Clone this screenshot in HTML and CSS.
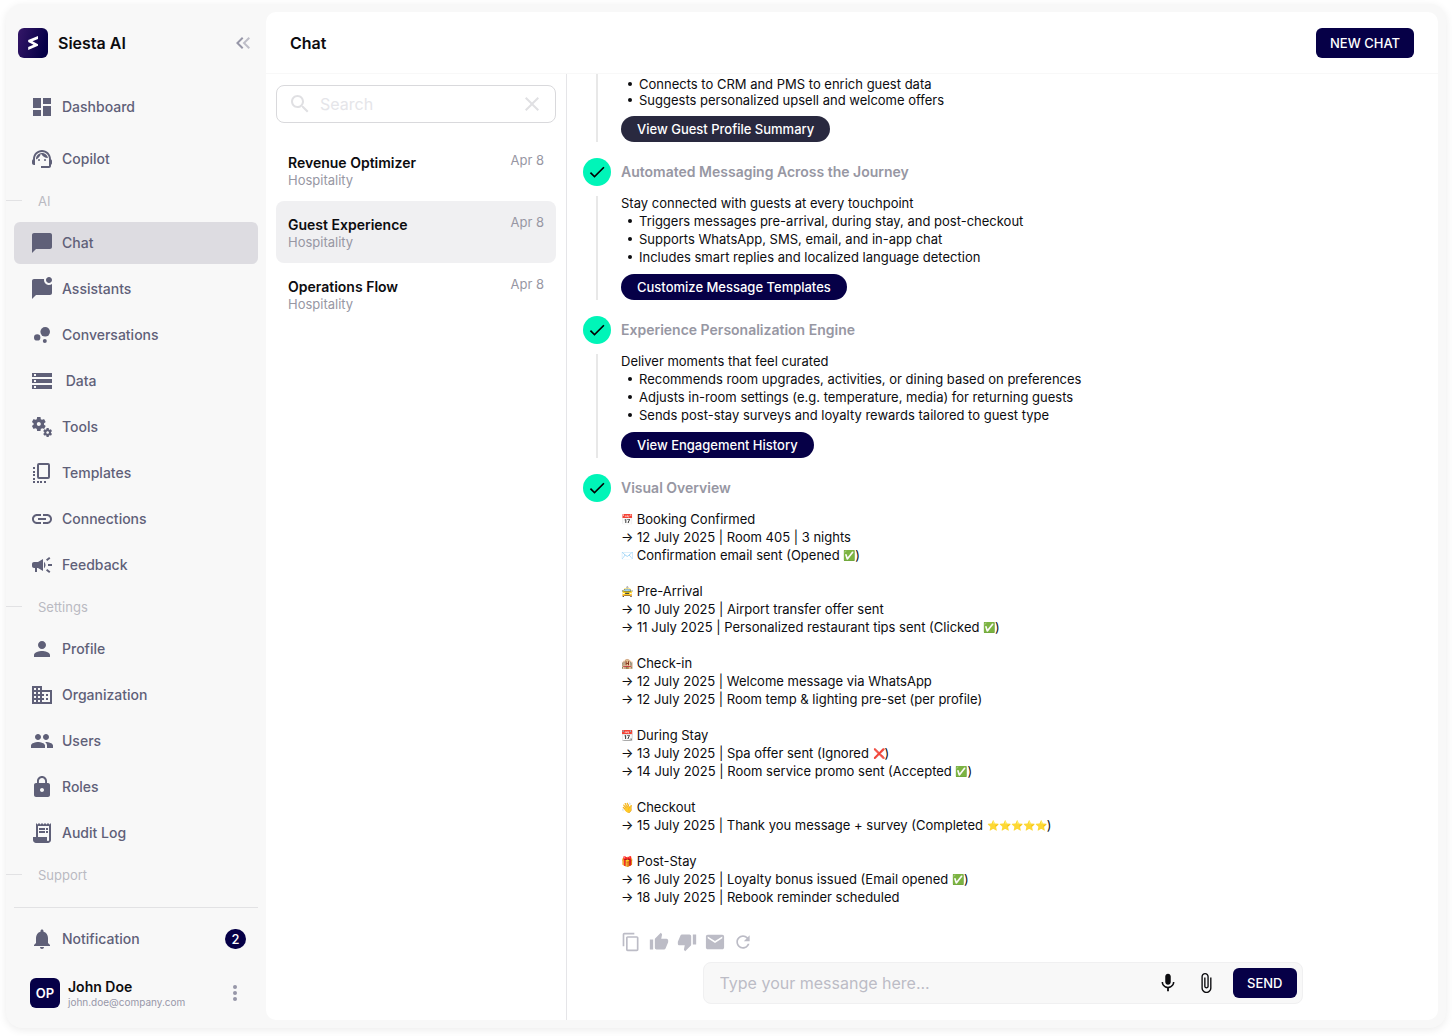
FILE: index.html
```html
<!DOCTYPE html>
<html lang="en">
  <head>
    <meta charset="UTF-8" />
    <meta name="viewport" content="width=device-width, initial-scale=1.0" />
    <title>Siesta AI - Chat</title>
    <link rel="stylesheet" href="styles.css">
  </head>

  <body>
    <div class="app">
      <aside class="sidebar">
        <div class="brand">
          <svg class="logo" viewBox="0 0 30 30">
            <defs>
              <linearGradient id="logo-bg" x1="0" y1="0" x2="1" y2="0.3">
                <stop offset="0" stop-color="#351768" />
                <stop offset="1" stop-color="#060047" />
              </linearGradient>
            </defs>
            <rect width="30" height="30" rx="6" fill="url(#logo-bg)" />
            <path d="M20 8v3l-5.500 2.300L20 16.200v1.600L10.200 22v-3l5.300-2.300-5.300-2.700v-1.900z" fill="#fff" />
          </svg>
          <span class="brand-name">Siesta AI</span>
          <button class="icon-button collapse" aria-label="Collapse menu">
            <svg class="icon" viewBox="0 0 24 24"><path opacity=".6" d="M17.590 18L19 16.590 14.420 12 19 7.410 17.590 6l-6 6z" /><path d="M11 18l1.410-1.410L7.830 12l4.580-4.590L11 6l-6 6z" /></svg>
          </button>
        </div>

        <nav class="nav">
          <div class="nav-group nav-top">
            <a class="nav-item" href="#">
              <svg class="icon" viewBox="0 0 24 24"><path d="M3 13h8V3H3v10zm0 8h8v-6H3v6zm10 0h8V11h-8v10zm0-18v6h8V3h-8z" /></svg>
              Dashboard
            </a>
            <a class="nav-item" href="#">
              <svg class="icon" viewBox="0 0 24 24"><path d="M21 12.220C21 6.730 16.740 3 12 3c-4.690 0-9 3.650-9 9.280-.6.340-1 .980-1 1.720v2c0 1.100.9 2 2 2h1v-6.100c0-3.870 3.130-7 7-7s7 3.130 7 7V19h-8v2h8c1.100 0 2-.9 2-2v-1.220c.590-.310 1-.920 1-1.640v-2.300c0-.7-.410-1.310-1-1.620z" /><circle cx="9" cy="13" r="1" /><circle cx="15" cy="13" r="1" /><path d="M18 11.030C17.520 8.180 15.040 6 12.050 6c-3.030 0-6.290 2.510-6.030 6.450 2.470-1.010 4.330-3.210 4.860-5.890 1.310 2.630 4 4.440 7.120 4.470z" /></svg>
              Copilot
            </a>
          </div>

          <h2 class="nav-label">AI</h2>
          <div class="nav-group">
            <a class="nav-item active" href="#">
              <svg class="icon" viewBox="0 0 24 24"><path d="M20 2H4c-1.100 0-2 .9-2 2v18l4-4h14c1.100 0 2-.9 2-2V4c0-1.100-.9-2-2-2z" /></svg>
              Chat
            </a>
            <a class="nav-item" href="#">
              <svg class="icon" viewBox="0 0 24 24"><path d="M22 6.980V16c0 1.100-.9 2-2 2H6l-4 4V4c0-1.100.9-2 2-2h10.100c-.060.320-.1.660-.1 1 0 2.760 2.240 5 5 5 1.130 0 2.160-.390 3-1.020zM16 3c0 1.660 1.340 3 3 3s3-1.340 3-3-1.340-3-3-3-3 1.340-3 3z" /></svg>
              Assistants
            </a>
            <a class="nav-item" href="#">
              <svg class="icon" viewBox="0 0 24 24"><circle cx="7.200" cy="14.400" r="3.200" /><circle cx="14.800" cy="18" r="2" /><circle cx="15.200" cy="8.800" r="4.800" /></svg>
              Conversations
            </a>
            <a class="nav-item" href="#">
              <svg class="icon" viewBox="0 0 24 24"><path d="M2 20h20v-4H2v4zm2-3h2v2H4v-2zM2 4v4h20V4H2zm4 3H4V5h2v2zm-4 7h20v-4H2v4zm2-3h2v2H4v-2z" /></svg>
              &nbsp;Data
            </a>
            <a class="nav-item" href="#">
              <svg class="icon" viewBox="0 0 24 24"><path d="M14.170 13.710l1.400-2.420c.090-.150.050-.340-.080-.450l-1.480-1.160c.030-.220.050-.450.050-.680s-.020-.460-.050-.690l1.480-1.160c.130-.110.170-.3.080-.450l-1.400-2.420c-.090-.150-.270-.210-.430-.150l-1.740.7c-.360-.280-.750-.510-1.180-.690l-.260-1.850c-.030-.160-.180-.290-.350-.290h-2.800c-.170 0-.320.130-.350.3L6.800 4.150c-.420.180-.820.410-1.180.690l-1.740-.7c-.160-.060-.340 0-.430.150l-1.400 2.420c-.090.150-.050.340.080.450l1.480 1.160c-.030.220-.050.450-.050.680s.020.460.050.690l-1.480 1.160c-.130.110-.170.3-.080.450l1.400 2.420c.090.150.270.210.430.150l1.740-.7c.360.280.750.510 1.180.690l.260 1.850c.030.160.180.290.350.290h2.800c.170 0 .320-.130.350-.3l.260-1.850c.420-.180.820-.410 1.180-.690l1.740.7c.160.060.340 0 .430-.150zM8.810 11c-1.100 0-2-.9-2-2s.9-2 2-2 2 .9 2 2-.9 2-2 2z" /><path d="M21.920 18.670l-.960-.740c.020-.140.040-.290.040-.440 0-.150-.010-.3-.040-.440l.950-.740c.080-.070.110-.190.050-.290l-.9-1.550c-.050-.1-.170-.130-.280-.1l-1.110.450c-.230-.180-.480-.330-.760-.440l-.170-1.180c-.010-.120-.110-.2-.210-.2h-1.790c-.110 0-.210.080-.220.190l-.170 1.180c-.270.120-.530.260-.760.440l-1.110-.450c-.1-.040-.220 0-.280.1l-.9 1.550c-.050.1-.040.220.050.290l.950.740c-.020.140-.030.290-.030.440 0 .150.010.3.030.440l-.950.740c-.080.070-.110.190-.050.290l.9 1.550c.050.1.170.130.280.1l1.110-.450c.230.180.480.330.760.440l.170 1.180c.020.110.110.190.220.190h1.790c.110 0 .210-.080.220-.190l.170-1.180c.270-.120.530-.260.750-.440l1.120.450c.1.040.220 0 .280-.1l.9-1.550c.060-.090.030-.210-.050-.280zm-4.290.160c-.740 0-1.350-.6-1.350-1.350s.6-1.350 1.350-1.350 1.350.6 1.350 1.350-.610 1.350-1.350 1.350z" /></svg>
              Tools
            </a>
            <a class="nav-item" href="#">
              <svg class="icon" viewBox="0 0 24 24"><rect x="8" y="3" width="11" height="14" rx="1" fill="none" stroke="currentColor" stroke-width="2" /><path d="M3 6h2v2H3zm0 4h2v2H3zm0 3h2v2H3zm0 4h2v2H3zm0 3h2v2H3zm4 0h2v2H7zm3 0h2v2h-2zm4 0h2v2h-2z" /></svg>
              Templates
            </a>
            <a class="nav-item" href="#">
              <svg class="icon" viewBox="0 0 24 24"><path d="M3.900 12c0-1.710 1.390-3.100 3.100-3.100h4V7H7c-2.760 0-5 2.240-5 5s2.240 5 5 5h4v-1.900H7c-1.710 0-3.100-1.390-3.100-3.100zM8 13h8v-2H8v2zm9-6h-4v1.900h4c1.710 0 3.100 1.390 3.100 3.100s-1.390 3.100-3.100 3.100h-4V17h4c2.760 0 5-2.240 5-5s-2.240-5-5-5z" /></svg>
              Connections
            </a>
            <a class="nav-item" href="#">
              <svg class="icon" viewBox="0 0 24 24"><path d="M18 11v2h4v-2h-4zm-2 6.610c.960.710 2.210 1.650 3.200 2.390.4-.530.8-1.070 1.200-1.600-.990-.740-2.240-1.680-3.200-2.400-.4.540-.8 1.080-1.200 1.610zM20.400 5.600c-.4-.530-.8-1.070-1.200-1.600-.990.740-2.240 1.680-3.200 2.400.4.530.8 1.070 1.200 1.600.960-.720 2.210-1.650 3.200-2.400zM4 9c-1.100 0-2 .9-2 2v2c0 1.100.9 2 2 2h1v4h2v-4h1l5 3V6L8 9H4zm11.500 3c0-1.330-.580-2.530-1.500-3.350v6.690c.920-.810 1.500-2.010 1.500-3.340z" /></svg>
              Feedback
            </a>
          </div>

          <h2 class="nav-label">Settings</h2>
          <div class="nav-group">
            <a class="nav-item" href="#">
              <svg class="icon" viewBox="0 0 24 24"><path d="M12 12c2.210 0 4-1.790 4-4s-1.790-4-4-4-4 1.790-4 4 1.790 4 4 4zm0 2c-2.670 0-8 1.340-8 4v2h16v-2c0-2.660-5.330-4-8-4z" /></svg>
              Profile
            </a>
            <a class="nav-item" href="#">
              <svg class="icon" viewBox="0 0 24 24"><path d="M12 7V3H2v18h20V7H12zM6 19H4v-2h2v2zm0-4H4v-2h2v2zm0-4H4V9h2v2zm0-4H4V5h2v2zm4 12H8v-2h2v2zm0-4H8v-2h2v2zm0-4H8V9h2v2zm0-4H8V5h2v2zm10 12h-8v-2h2v-2h-2v-2h2v-2h-2V9h8v10zm-2-8h-2v2h2v-2zm0 4h-2v2h2v-2z" /></svg>
              Organization
            </a>
            <a class="nav-item" href="#">
              <svg class="icon" viewBox="0 0 24 24"><path d="M16 11c1.660 0 2.990-1.340 2.990-3S17.660 5 16 5c-1.660 0-3 1.340-3 3s1.340 3 3 3zm-8 0c1.660 0 2.990-1.340 2.990-3S9.660 5 8 5C6.340 5 5 6.340 5 8s1.340 3 3 3zm0 2c-2.330 0-7 1.170-7 3.500V19h14v-2.500c0-2.330-4.670-3.500-7-3.500zm8 0c-.290 0-.620.020-.970.050 1.160.840 1.970 1.970 1.970 3.450V19h6v-2.500c0-2.330-4.670-3.500-7-3.500z" /></svg>
              Users
            </a>
            <a class="nav-item" href="#">
              <svg class="icon" viewBox="0 0 24 24"><path d="M18 8h-1V6c0-2.760-2.240-5-5-5S7 3.240 7 6v2H6c-1.100 0-2 .9-2 2v10c0 1.100.9 2 2 2h12c1.100 0 2-.9 2-2V10c0-1.100-.9-2-2-2zm-6 9c-1.100 0-2-.9-2-2s.9-2 2-2 2 .9 2 2-.9 2-2 2zm3.100-9H8.900V6c0-1.710 1.390-3.100 3.100-3.100 1.710 0 3.100 1.390 3.100 3.100v2z" /></svg>
              Roles
            </a>
            <a class="nav-item" href="#">
              <svg class="icon" viewBox="0 0 24 24"><path d="M19.500 3.500L18 2l-1.500 1.500L15 2l-1.500 1.500L12 2l-1.500 1.500L9 2 7.500 3.500 6 2v14H3v3c0 1.660 1.340 3 3 3h12c1.660 0 3-1.340 3-3V2l-1.500 1.500zM19 19c0 .550-.450 1-1 1s-1-.450-1-1v-3H8V5h11v14z" /><path d="M9 7h6v2H9zm7 0h2v2h-2zm-7 3h6v2H9zm7 0h2v2h-2z" /></svg>
              Audit Log
            </a>
          </div>

          <h2 class="nav-label">Support</h2>
        </nav>

        <div class="sidebar-footer">
          <a class="nav-item" href="#">
            <svg class="icon" viewBox="0 0 24 24"><path d="M12 22c1.100 0 2-.9 2-2h-4c0 1.100.890 2 2 2zm6-6v-5c0-3.070-1.640-5.640-4.500-6.320V4c0-.830-.670-1.500-1.500-1.500s-1.500.670-1.500 1.500v.680C7.630 5.360 6 7.920 6 11v5l-2 2v1h16v-1l-2-2z" /></svg>
            Notification
            <span class="badge">2</span>
          </a>
          <div class="user">
            <div class="avatar">OP</div>
            <div class="user-info">
              <div class="user-name">John Doe</div>
              <div class="user-email">john.doe@company.com</div>
            </div>
            <button class="icon-button user-menu" aria-label="Account menu">
              <svg class="icon" viewBox="0 0 24 24"><circle cx="12" cy="6" r="2" /><circle cx="12" cy="12" r="2" /><circle cx="12" cy="18" r="2" /></svg>
            </button>
          </div>
        </div>
      </aside>

      <main class="main">
        <header class="main-header">
          <h1>Chat</h1>
          <button class="primary-button">NEW CHAT</button>
        </header>

        <div class="main-body">
          <section class="chat-list">
            <div class="search">
              <svg class="icon" viewBox="0 0 24 24"><path d="M15.500 14h-.790l-.280-.270C15.410 12.590 16 11.110 16 9.500 16 5.910 13.090 3 9.500 3S3 5.910 3 9.500 5.910 16 9.500 16c1.610 0 3.090-.590 4.230-1.570l.270.280v.790l5 4.990L20.490 19l-4.990-5zm-6 0C7.010 14 5 11.990 5 9.500S7.010 5 9.500 5 14 7.010 14 9.500 11.990 14 9.500 14z" /></svg>
              <input type="text" placeholder="Search" aria-label="Search" />
              <button class="icon-button" aria-label="Clear search">
                <svg class="icon" viewBox="0 0 24 24"><path d="M19 6.410L17.590 5 12 10.590 6.410 5 5 6.410 10.590 12 5 17.590 6.410 19 12 13.410 17.590 19 19 17.590 13.410 12z" /></svg>
              </button>
            </div>

            <a class="chat-item" href="#">
              <div>
                <div class="chat-title">Revenue Optimizer</div>
                <div class="chat-tag">Hospitality</div>
              </div>
              <span class="chat-date">Apr 8</span>
            </a>
            <a class="chat-item selected" href="#">
              <div>
                <div class="chat-title">Guest Experience</div>
                <div class="chat-tag">Hospitality</div>
              </div>
              <span class="chat-date">Apr 8</span>
            </a>
            <a class="chat-item" href="#">
              <div>
                <div class="chat-title">Operations Flow</div>
                <div class="chat-tag">Hospitality</div>
              </div>
              <span class="chat-date">Apr 8</span>
            </a>
          </section>

          <section class="conversation">
            <div class="messages">
              <div class="step-body step-first">
                <div class="step-content">
                  <ul>
                    <li>Connects to CRM and PMS to enrich guest data</li>
                    <li>Suggests personalized upsell and welcome offers</li>
                  </ul>
                  <button class="pill hovered">View Guest Profile Summary</button>
                </div>
              </div>

              <div class="step-head">
                <span class="check"><svg viewBox="0 0 24 24"><path d="M9 16.170L4.830 12l-1.420 1.410L9 19 21 7l-1.410-1.410z" /></svg></span>
                <h3>Automated Messaging Across the Journey</h3>
              </div>
              <div class="step-body">
                <div class="step-content">
                  <p>Stay connected with guests at every touchpoint</p>
                  <ul>
                    <li>Triggers messages pre-arrival, during stay, and post-checkout</li>
                    <li>Supports WhatsApp, SMS, email, and in-app chat</li>
                    <li>Includes smart replies and localized language detection</li>
                  </ul>
                  <button class="pill">Customize Message Templates</button>
                </div>
              </div>

              <div class="step-head">
                <span class="check"><svg viewBox="0 0 24 24"><path d="M9 16.170L4.830 12l-1.420 1.410L9 19 21 7l-1.410-1.410z" /></svg></span>
                <h3>Experience Personalization Engine</h3>
              </div>
              <div class="step-body">
                <div class="step-content">
                  <p>Deliver moments that feel curated</p>
                  <ul>
                    <li>Recommends room upgrades, activities, or dining based on preferences</li>
                    <li>Adjusts in-room settings (e.g. temperature, media) for returning guests</li>
                    <li>Sends post-stay surveys and loyalty rewards tailored to guest type</li>
                  </ul>
                  <button class="pill">View Engagement History</button>
                </div>
              </div>

              <div class="step-head">
                <span class="check"><svg viewBox="0 0 24 24"><path d="M9 16.170L4.830 12l-1.420 1.410L9 19 21 7l-1.410-1.410z" /></svg></span>
                <h3>Visual Overview</h3>
              </div>
              <div class="overview">
                <p><span class="emoji">📅</span> Booking Confirmed<br />→ 12 July 2025 | Room 405 | 3 nights<br /><span class="emoji">✉️</span> Confirmation email sent (Opened <span class="emoji">✅</span>)</p>
                <p><span class="emoji">🚖</span> Pre-Arrival<br />→ 10 July 2025 | Airport transfer offer sent<br />→ 11 July 2025 | Personalized restaurant tips sent (Clicked <span class="emoji">✅</span>)</p>
                <p><span class="emoji">🏨</span> Check-in<br />→ 12 July 2025 | Welcome message via WhatsApp<br />→ 12 July 2025 | Room temp &amp; lighting pre-set (per profile)</p>
                <p><span class="emoji">📆</span> During Stay<br />→ 13 July 2025 | Spa offer sent (Ignored <span class="emoji">❌</span>)<br />→ 14 July 2025 | Room service promo sent (Accepted <span class="emoji">✅</span>)</p>
                <p><span class="emoji">👋</span> Checkout<br />→ 15 July 2025 | Thank you message + survey (Completed <span class="emoji">⭐⭐⭐⭐⭐</span>)</p>
                <p><span class="emoji">🎁</span> Post-Stay<br />→ 16 July 2025 | Loyalty bonus issued (Email opened <span class="emoji">✅</span>)<br />→ 18 July 2025 | Rebook reminder scheduled</p>
              </div>

              <div class="message-actions">
                <button class="icon-button" aria-label="Copy"><svg class="icon" viewBox="0 0 24 24"><path d="M16 1H4c-1.100 0-2 .9-2 2v14h2V3h12V1zm3 4H8c-1.100 0-2 .9-2 2v14c0 1.100.9 2 2 2h11c1.100 0 2-.9 2-2V7c0-1.100-.9-2-2-2zm0 16H8V7h11v14z" /></svg></button>
                <button class="icon-button" aria-label="Like"><svg class="icon" viewBox="0 0 24 24"><path d="M1 21h4V9H1v12zm22-11c0-1.100-.9-2-2-2h-6.310l.950-4.570.030-.320c0-.410-.170-.790-.440-1.060L14.170 1 7.590 7.590C7.220 7.950 7 8.450 7 9v10c0 1.100.9 2 2 2h9c.830 0 1.540-.5 1.840-1.220l3.020-7.050c.090-.230.140-.470.140-.730v-2z" /></svg></button>
                <button class="icon-button" aria-label="Dislike"><svg class="icon" viewBox="0 0 24 24"><path d="M15 3H6c-.830 0-1.540.5-1.840 1.220l-3.020 7.050c-.090.230-.140.470-.140.730v2c0 1.100.9 2 2 2h6.310l-.950 4.570-.030.320c0 .410.170.790.440 1.060L9.830 23l6.590-6.590c.360-.360.580-.860.580-1.410V5c0-1.100-.9-2-2-2zm4 0v12h4V3h-4z" /></svg></button>
                <button class="icon-button" aria-label="Send by email"><svg class="icon" viewBox="1 1 22 22"><path d="M20 4H4c-1.100 0-1.990.9-1.990 2L2 18c0 1.100.9 2 2 2h16c1.100 0 2-.9 2-2V6c0-1.100-.9-2-2-2zm0 4l-8 5-8-5V6l8 5 8-5v2z" /></svg></button>
                <button class="icon-button" aria-label="Regenerate"><svg class="icon" viewBox="0 0 24 24"><path d="M17.650 6.350C16.200 4.900 14.210 4 12 4c-4.420 0-7.990 3.580-7.990 8s3.570 8 7.990 8c3.730 0 6.840-2.550 7.730-6h-2.080c-.820 2.330-3.040 4-5.650 4-3.310 0-6-2.690-6-6s2.690-6 6-6c1.660 0 3.140.690 4.220 1.780L13 11h7V4l-2.350 2.350z" /></svg></button>
              </div>
            </div>

            <form class="composer">
              <input type="text" placeholder="Type your messange here..." aria-label="Message" />
              <button type="button" class="icon-button" aria-label="Record voice"><svg class="icon" viewBox="0 0 24 24"><path d="M12 14c1.660 0 2.990-1.340 2.990-3L15 5c0-1.660-1.340-3-3-3S9 3.340 9 5v6c0 1.660 1.340 3 3 3zm5.300-3c0 3-2.540 5.100-5.300 5.100S6.700 14 6.700 11H5c0 3.410 2.720 6.230 6 6.720V21h2v-3.280c3.280-.480 6-3.300 6-6.720h-1.700z" /></svg></button>
              <button type="button" class="icon-button" aria-label="Attach file"><svg class="icon" viewBox="0 0 24 24"><path d="M16.500 6v11.500c0 2.210-1.790 4-4 4s-4-1.790-4-4V5c0-1.380 1.120-2.500 2.500-2.500s2.500 1.120 2.500 2.500v10.500c0 .550-.450 1-1 1s-1-.450-1-1V6H10v9.500c0 1.380 1.120 2.500 2.500 2.500s2.500-1.120 2.500-2.500V5c0-2.210-1.790-4-4-4S7 2.790 7 5v12.500c0 3.040 2.460 5.500 5.500 5.500s5.500-2.460 5.500-5.500V6h-1.500z" /></svg></button>
              <button type="button" class="primary-button">SEND</button>
            </form>
          </section>
        </div>
      </main>
    </div>
  </body>
</html>
```

FILE: styles.css
```css
* {
  box-sizing: border-box;
}

body {
  margin: 0;
  padding: 4px 6px 8px;
  height: 100vh;
  background: white;
  font-family: Inter, sans-serif;
  color: #0c0c0f;
}

h1,
h2,
h3,
p,
ul {
  margin: 0;
  padding: 0;
  font-weight: normal;
}

a {
  color: inherit;
  text-decoration: none;
}

button,
input {
  font-family: inherit;
  color: inherit;
}

button {
  padding: 0;
  border: none;
  background: none;
  cursor: pointer;
}

.icon {
  display: block;
  flex: none;
  width: 24px;
  height: 24px;
  fill: currentColor;
}

.icon-button {
  flex: none;
}

.app {
  display: flex;
  height: 100%;
  border-radius: 16px;
  background: #f8f8f8;
  box-shadow: 0 2px 8px rgba(0, 0, 0, 0.08);
}

/* sidebar */

.sidebar {
  display: flex;
  flex-direction: column;
  flex: none;
  width: 260px;
  padding: 24px 8px 20px;
}

.brand {
  display: flex;
  align-items: center;
  height: 30px;
  margin: 0 3px 28px 4px;
}

.logo {
  width: 30px;
  height: 30px;
  margin-right: 10px;
}

.brand-name {
  font-size: 16px;
  font-weight: 600;
}

.collapse {
  margin-left: auto;
  color: #9797a8;
}

.nav {
  flex: 1;
  overflow: hidden;
  margin: 0 -8px;
  padding: 0 8px;
}

.nav-group {
  display: flex;
  flex-direction: column;
  gap: 4px;
}

.nav-top {
  gap: 10px;
}

.nav-item {
  display: flex;
  align-items: center;
  gap: 8px;
  height: 42px;
  padding: 0 12px 0 16px;
  border-radius: 6px;
  color: #5f6078;
  font-size: 14px;
  font-weight: 500;
  line-height: 20px;
}

.nav-item.active {
  background: #dddce1;
}

.nav-label {
  display: flex;
  align-items: center;
  gap: 16px;
  height: 42px;
  margin-left: -8px;
  padding-bottom: 1px;
  color: #babac2;
  font-size: 13px;
  line-height: 18px;
}

.nav-label::before {
  content: "";
  width: 16px;
  height: 1px;
  background: #e2e2e4;
}

.sidebar-footer {
  padding-top: 10px;
  border-top: 1px solid #e2e2e4;
}

.badge {
  min-width: 21px;
  height: 20px;
  margin-left: auto;
  border-radius: 10px;
  background: #060047;
  color: white;
  font-size: 13px;
  text-align: center;
}

.user {
  display: flex;
  align-items: center;
  gap: 8px;
  margin-top: 18px;
  padding: 0 11px 0 16px;
}

.avatar {
  width: 30px;
  height: 30px;
  border-radius: 6px;
  background: #060047;
  color: white;
  font-size: 13px;
  font-weight: 600;
  line-height: 30px;
  text-align: center;
}

.user-name {
  font-size: 14px;
  font-weight: 600;
  line-height: 18px;
}

.user-email {
  color: #9797a8;
  font-size: 10px;
  line-height: 12px;
}

.user-menu {
  margin-left: auto;
  color: #9797a8;
}

/* main panel */

.main {
  display: flex;
  flex-direction: column;
  flex: 1;
  min-width: 0;
  margin: 8px 8px 8px 0;
  border-radius: 10px;
  background: white;
}

.main-header {
  display: flex;
  align-items: center;
  justify-content: space-between;
  height: 62px;
  padding: 0 24px;
  border-bottom: 1px solid #f8f8f8;
}

.main-header h1 {
  font-size: 16px;
  font-weight: 600;
}

.primary-button {
  height: 30px;
  padding: 0 14px;
  border-radius: 6px;
  background: #060047;
  color: white;
  font-size: 13px;
  font-weight: 500;
}

.main-body {
  display: flex;
  flex: 1;
  min-height: 0;
}

.chat-list {
  flex: none;
  width: 301px;
  padding: 11px 10px 0;
  border-right: 1px solid #e5e5e8;
}

.search {
  display: flex;
  align-items: center;
  height: 38px;
  margin-bottom: 16px;
  padding: 0 11px;
  border: 1px solid #d9d9dc;
  border-radius: 8px;
  color: #e0e0e3;
}

.search input {
  flex: 1;
  min-width: 0;
  padding: 0 8px;
  border: none;
  outline: none;
  background: none;
  font-size: 16px;
}

.search input::placeholder {
  color: #e5e5e9;
}

.chat-item {
  display: flex;
  justify-content: space-between;
  height: 62px;
  padding: 12px;
  border-radius: 8px;
}

.chat-item.selected {
  background: #f0f0f2;
}

.chat-title {
  margin-top: 2px;
  font-size: 14px;
  font-weight: 600;
  line-height: 20px;
}

.chat-tag,
.chat-date {
  color: #9797a3;
  font-size: 13px;
  line-height: 14px;
}

.chat-date {
  line-height: 18px;
}

/* conversation */

.conversation {
  display: flex;
  flex-direction: column;
  flex: 1;
  min-width: 0;
}

.messages {
  flex: 1;
  overflow: hidden;
  padding-left: 16px;
  font-size: 13px;
  line-height: 18px;
}

.step-head {
  display: flex;
  align-items: center;
  gap: 10px;
  height: 28px;
}

.step-head h3 {
  color: #9797a3;
  font-size: 14px;
  font-weight: 600;
}

.check {
  display: flex;
  align-items: center;
  justify-content: center;
  width: 28px;
  height: 28px;
  border-radius: 50%;
  background: #00f5b8;
}

.check svg {
  width: 20px;
  height: 20px;
}

.step-body {
  display: flex;
  margin-bottom: 16px;
}

.step-body::before {
  content: "";
  width: 2px;
  margin: 10px 23px 0 13px;
  background: #e8e8e8;
}

.step-content {
  padding-top: 8px;
}

.step-first::before {
  margin-top: 0;
}

.step-first .step-content {
  padding-top: 2px;
  line-height: 16px;
}

.step-content ul {
  padding-left: 7px;
  list-style: none;
}

.step-content li {
  display: flex;
  align-items: center;
  gap: 7px;
}

.step-content li::before {
  content: "";
  width: 4px;
  height: 4px;
  border-radius: 50%;
  background: currentColor;
}

.pill {
  display: block;
  height: 26px;
  margin-top: 8px;
  padding: 0 16px;
  border-radius: 13px;
  background: #060047;
  color: white;
  font-size: 13px;
  font-weight: 500;
  line-height: 16px;
}

.pill.hovered {
  background: #29293f;
}

.overview {
  padding: 8px 0 0 38px;
}

.overview p {
  margin-bottom: 18px;
}

/* emoji glyphs are wider than their font size */
.emoji {
  font-size: 10px;
  line-height: 1;
  vertical-align: 1px;
}

.message-actions {
  display: flex;
  gap: 8px;
  padding: 8px 0 0 38px;
  color: #bcbcc6;
}

.message-actions .icon {
  width: 20px;
  height: 20px;
}

.composer {
  display: flex;
  align-items: center;
  gap: 16px;
  width: 600px;
  max-width: 100%;
  height: 42px;
  margin: 0 auto 16px;
  padding: 0 5px 0 16px;
  border: 1px solid #f0f0f1;
  border-radius: 8px;
  background: #f8f8f8;
}

.composer input {
  flex: 1;
  min-width: 0;
  padding: 0;
  border: none;
  outline: none;
  background: none;
  font-size: 16px;
}

.composer input::placeholder {
  color: #bcbcc6;
}

.composer .icon {
  width: 22px;
  height: 22px;
}
```
